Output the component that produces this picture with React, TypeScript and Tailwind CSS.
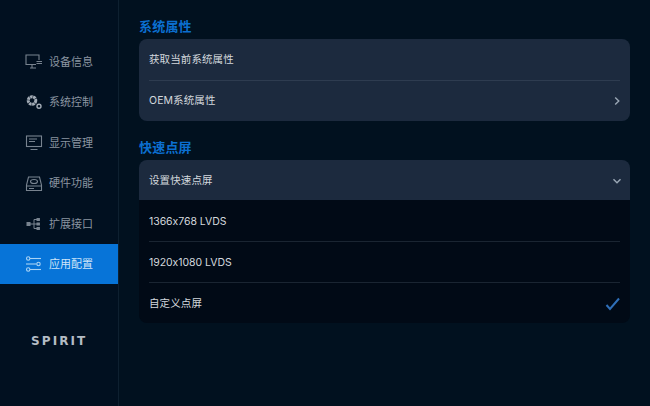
const cjk = "font-['Inter','Noto_Sans_CJK_SC',sans-serif]";

const Monitor = () => (
  <svg width="18" height="16" viewBox="0 0 18 16" fill="none" stroke="currentColor" strokeWidth="1.1">
    <path d="M11 10.5H1V1h13v5" />
    <path d="M5 14h6M7 10.5V14" />
    <path d="M11.5 7.5h5.5M11.5 9.5h5.5" strokeWidth="1.2" />
  </svg>
);
const Gears = () => (
  <svg width="18" height="16" viewBox="0 0 18 16" fill="none" stroke="#a3acb6">
    <circle cx="7" cy="6.5" r="3.8" strokeWidth="3" strokeDasharray="2.6 0.5" />
    <circle cx="14" cy="12.2" r="2" strokeWidth="1.4" />
  </svg>
);
const Screen = () => (
  <svg width="18" height="16" viewBox="0 0 18 16" fill="none" stroke="currentColor" strokeWidth="1.1">
    <rect x="1.5" y="1" width="15" height="10.5" />
    <path d="M4 4h8M4 6.5h6M5.5 14.5h7" />
  </svg>
);
const Drive = () => (
  <svg width="18" height="16" viewBox="0 0 18 16" fill="none" stroke="currentColor" strokeWidth="1.1">
    <path d="M3.5 1h11l2 8v5.5h-15V9z" />
    <ellipse cx="9" cy="5.5" rx="3.5" ry="2" />
    <path d="M1.5 10h15M4 12.5h5" />
  </svg>
);
const Ports = () => (
  <svg width="18" height="16" viewBox="0 0 18 16" fill="none" stroke="currentColor" strokeWidth="1">
    <rect x="2" y="6.5" width="3" height="3" fill="currentColor" />
    <path d="M5 8h4M9 3.5v9M9 3.5h3M9 8h3M9 12.5h3" />
    <rect x="12" y="2.5" width="2.4" height="2" fill="currentColor" />
    <rect x="12" y="7" width="2.4" height="2" fill="currentColor" />
    <rect x="12" y="11.5" width="2.4" height="2" fill="currentColor" />
  </svg>
);
const Sliders = () => (
  <svg width="18" height="16" viewBox="0 0 18 16" fill="none" stroke="currentColor" strokeWidth="1.1">
    <circle cx="3.2" cy="2.5" r="1.7" />
    <path d="M5 2.5h11" />
    <path d="M1 8h10.5" />
    <circle cx="13.5" cy="8" r="1.7" />
    <circle cx="3.2" cy="13.5" r="1.7" />
    <path d="M5 13.5h11" />
  </svg>
);

const nav = [
  { label: "设备信息", Icon: Monitor },
  { label: "系统控制", Icon: Gears },
  { label: "显示管理", Icon: Screen },
  { label: "硬件功能", Icon: Drive },
  { label: "扩展接口", Icon: Ports },
];

const Chevron = ({ down }: { down?: boolean }) => (
  <svg className="-mr-[2px]" width="10" height="10" viewBox="0 0 10 10" fill="none" stroke="#9aa7b5" strokeWidth="1.4">
    <path d={down ? "M1.5 3.2 5 6.8l3.5-3.6" : "M3.2 1.5 6.8 5 3.2 8.5"} />
  </svg>
);

const rowText = "text-[10.5px] text-[#d3d8dd] tracking-[0.1px]";
const latinText = "text-[10.5px] text-[#d3d8dd] tracking-[-0.05px]";
const sectionTitle = "text-[13px] font-bold leading-[16px] tracking-[0.2px] text-[#0b6fd0]";

export default function App() {
  return (
    <div className={`flex h-[406px] w-[650px] overflow-hidden bg-[#01111f] ${cjk}`}>
      <aside className="flex h-full w-[119px] shrink-0 flex-col border-r border-[#0e2030] bg-[#011020] pt-[41px]">
        {nav.map(({ label, Icon }) => (
          <div key={label} className="flex h-[40.6px] items-center gap-[6px] pl-[25px] pt-[1px] text-[#78838f]">
            <Icon />
            <span className="text-[11px] text-[#8b95a0]">{label}</span>
          </div>
        ))}
        <div className="flex h-[40px] items-center gap-[6px] bg-[#0774d8] pl-[25px] text-[#a9d3f5]">
          <Sliders />
          <span className="text-[11px] text-[#cfe5f8]">应用配置</span>
        </div>
        <div className="mt-[49px] pl-[31px] text-[12px] font-bold leading-[16px] tracking-[2.1px] text-[#b4bcc5] [font-family:'DejaVu_Sans',sans-serif]">
          SPIRIT
        </div>
      </aside>

      <main className="flex-1 pl-[20px] pr-[20px] pt-[18px]">
        <h2 className={`mb-[5px] ${sectionTitle}`}>系统属性</h2>
        <div className="rounded-[8px] bg-[#1c2a3e] px-[10px]">
          <div className="flex h-[42px] items-center border-b border-[#2e3c50] pt-[1px]">
            <span className={rowText}>获取当前系统属性</span>
          </div>
          <div className="flex h-[40px] items-center justify-between">
            <span className={rowText}>OEM系统属性</span>
            <Chevron />
          </div>
        </div>

        <h2 className={`mb-[5px] mt-[18px] ${sectionTitle}`}>快速点屏</h2>
        <div className="flex h-[40px] items-center justify-between rounded-t-[8px] bg-[#1c2a3e] px-[10px] pt-[1px]">
          <span className={rowText}>设置快速点屏</span>
          <Chevron down />
        </div>
        <div className="rounded-b-[8px] bg-[#010a16] px-[10px]">
          <div className="flex h-[42px] items-center border-b border-[#1a2532] pt-[2px]">
            <span className={latinText}>1366x768 LVDS</span>
          </div>
          <div className="flex h-[41px] items-center border-b border-[#1a2532] pt-[1px]">
            <span className={latinText}>1920x1080 LVDS</span>
          </div>
          <div className="flex h-[40px] items-center justify-between pt-[1px]">
            <span className={rowText}>自定义点屏</span>
            <svg width="16" height="14" viewBox="0 0 16 14" fill="none" stroke="#2f6fb8" strokeWidth="2">
              <path d="M2.5 8 6 12 15 1.5" />
            </svg>
          </div>
        </div>
      </main>
    </div>
  );
}
